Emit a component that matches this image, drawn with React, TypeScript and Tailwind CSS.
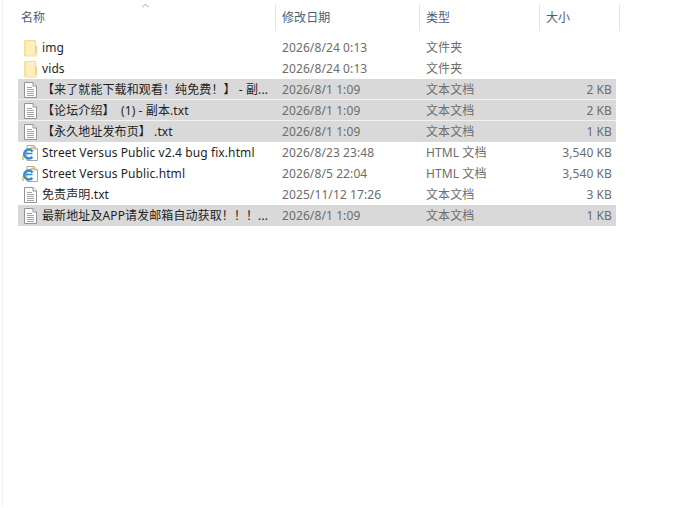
import React from 'react';
import { ChevronUp } from 'lucide-react';

type Kind = 'folder' | 'text' | 'ie';

interface Row {
  name: string;
  date: string;
  type: string;
  size: string;
  kind: Kind;
  selected?: boolean;
  divider?: boolean;
}

const rows: Row[] = [
  { name: 'img', date: '2026/8/24 0:13', type: '文件夹', size: '', kind: 'folder' },
  { name: 'vids', date: '2026/8/24 0:13', type: '文件夹', size: '', kind: 'folder' },
  { name: '【来了就能下载和观看！纯免费！】 - 副...', date: '2026/8/1 1:09', type: '文本文档', size: '2 KB', kind: 'text', selected: true, divider: true },
  { name: '【论坛介绍】\u00a0\u00a0(1) - 副本.txt', date: '2026/8/1 1:09', type: '文本文档', size: '2 KB', kind: 'text', selected: true, divider: true },
  { name: '【永久地址发布页】 .txt', date: '2026/8/1 1:09', type: '文本文档', size: '1 KB', kind: 'text', selected: true },
  { name: 'Street Versus Public v2.4 bug fix.html', date: '2026/8/23 23:48', type: 'HTML 文档', size: '3,540 KB', kind: 'ie' },
  { name: 'Street Versus Public.html', date: '2026/8/5 22:04', type: 'HTML 文档', size: '3,540 KB', kind: 'ie' },
  { name: '免责声明.txt', date: '2025/11/12 17:26', type: '文本文档', size: '3 KB', kind: 'text' },
  { name: '最新地址及APP请发邮箱自动获取！！！...', date: '2026/8/1 1:09', type: '文本文档', size: '1 KB', kind: 'text', selected: true },
];

const FileIcon = ({ kind }: { kind: Kind }) => {
  if (kind === 'folder') {
    return (
      <svg width="14" height="17" viewBox="0 0 14 17" className="shrink-0">
        <path d="M0.5 1 Q0.5 0.5 1 0.5 H11.5 V16 H1 Q0.5 16 0.5 15.5 Z" fill="#fde9ae" stroke="#f0d488" strokeWidth="0.8" />
        <path d="M3 1 H11 V15.5 H3 Z" fill="#ffefc0" />
        <path d="M11.5 5 L13 6 V16 H11.5 Z" fill="#eed28a" />
        <path d="M10 13.5 H13 V16 H10 Z" fill="#fff4d2" stroke="#ecd08a" strokeWidth="0.5" />
      </svg>
    );
  }
  if (kind === 'text') {
    return (
      <svg width="13" height="16" viewBox="0 0 13 16" className="shrink-0">
        <path d="M0.5 0.5 H9 L12.5 4 V15.5 H0.5 Z" fill="#fdfdfd" stroke="#949494" />
        <path d="M9 0.5 V4 H12.5" fill="#eeeeee" stroke="#949494" />
        <path d="M3 5.5 H8 M3 7.5 H10 M3 9.5 H10 M3 11.5 H10 M3 13.5 H10" stroke="#9a9a9a" strokeWidth="0.9" />
      </svg>
    );
  }
  return (
    <svg width="17" height="16" viewBox="0 0 17 16" className="shrink-0">
      <path d="M5 0.5 H12 L15.5 4 V15.5 H5 Z" fill="#ffffff" stroke="#a8a8a8" />
      <path d="M12 0.5 V4 H15.5" fill="#eeeeee" stroke="#a8a8a8" />
      <path d="M1.5 15 Q-0.5 12.5 3 7.5 Q6 3.5 11 2.5 Q13 2.2 12 4" fill="none" stroke="#e8b83c" strokeWidth="1.4" />
      <circle cx="6.8" cy="9" r="4.5" fill="none" stroke="#2c8fd8" strokeWidth="2.6" strokeDasharray="22 6" strokeDashoffset="-3" />
      <path d="M3.5 8.5 H10.5" stroke="#2c8fd8" strokeWidth="1.6" />
    </svg>
  );
};

const HeaderCell = ({ label, className }: { label: string; className: string }) => (
  <div className={`${className} h-[27px] flex items-center border-r border-[#e5e5e5] text-[#4c607a]`}>
    {label}
  </div>
);

const App: React.FC = () => {
  return (
    <div
      className="w-[694px] h-[508px] bg-white overflow-hidden text-[12px] tracking-[0.1px] pl-[2px]"
      style={{ fontFamily: '"Noto Sans", "Noto Sans CJK SC", sans-serif' }}
    >
      <div className="h-[507px] border-l border-[#f1f1f1] pl-[15px] relative">
        <ChevronUp className="absolute left-[137px] top-0 text-[#777777]" size={11} strokeWidth={1.5} />
        <div className="flex pt-[4px] mb-[6px]">
          <HeaderCell label="名称" className="w-[258px] pl-[3px]" />
          <HeaderCell label="修改日期" className="w-[144px] pl-[6px]" />
          <HeaderCell label="类型" className="w-[120px] pl-[6px]" />
          <HeaderCell label="大小" className="w-[80px] pl-[6px]" />
        </div>
        <div className="w-[598px] flex flex-col">
          {rows.map((row) => (
            <div
              key={row.name}
              className={`h-[21px] pt-[2px] flex items-center border-b ${row.selected ? 'bg-[#d9d9d9]' : ''} ${row.divider ? 'border-[#f2f2f2]' : 'border-transparent'}`}
            >
              <div className={`w-[257px] flex items-center shrink-0 overflow-hidden whitespace-nowrap text-[#1f1f1f] ${row.kind === 'ie' ? 'pl-[4px] gap-[3px]' : row.kind === 'folder' ? 'pl-[6px] gap-[4px]' : 'pl-[6px] gap-[5px]'}`}>
                <FileIcon kind={row.kind} />
                <span>{row.name}</span>
              </div>
              <div className="w-[144px] shrink-0 pl-[7px] text-[#6d6d6d]">{row.date}</div>
              <div className="w-[120px] shrink-0 pl-[7px] text-[#6d6d6d]">{row.type}</div>
              <div className="flex-1 text-right pr-[4px] text-[#6d6d6d]">{row.size}</div>
            </div>
          ))}
        </div>
      </div>
    </div>
  );
};

export default App;
